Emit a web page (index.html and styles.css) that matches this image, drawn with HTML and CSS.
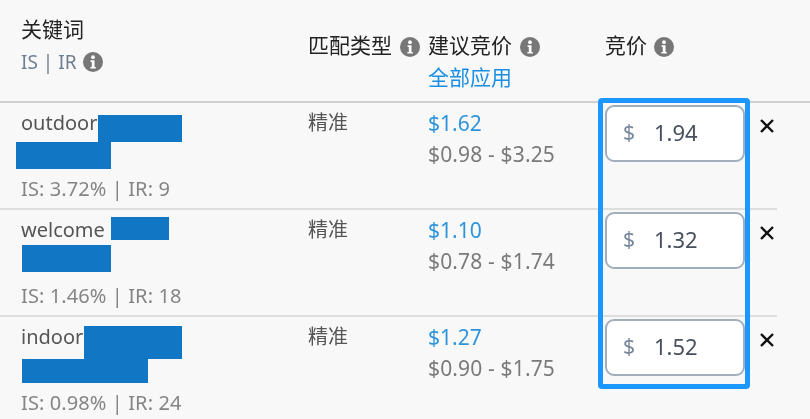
FILE: index.html
```html
<!DOCTYPE html>
<html lang="zh-CN">
<head>
<meta charset="utf-8">
<title>关键词竞价</title>
<link rel="stylesheet" href="styles.css">
</head>
<body>
<svg class="defs" width="0" height="0" aria-hidden="true">
  <symbol id="info" viewBox="0 0 20 20">
    <circle cx="10" cy="10" r="10" fill="#777"/>
    <circle cx="10" cy="5.2" r="1.9" fill="#fff"/>
    <path d="M7.6 8.3h3.9v6.6h1.3v1.6H7.4v-1.6h1.4v-5H7.6z" fill="#fff"/>
  </symbol>
  <symbol id="close" viewBox="0 0 16 16">
    <path d="M2 2l12 12M14 2L2 14" stroke="#111" stroke-width="2.4" fill="none"/>
  </symbol>
</svg>
<main class="table">
  <header class="head">
    <div class="head-kw">
      <div class="title">关键词</div>
      <div class="sub"><span class="soft">IS | IR</span> <svg class="info"><use href="#info"/></svg></div>
    </div>
    <div class="head-match"><span class="title">匹配类型</span> <svg class="info info-wide"><use href="#info"/></svg></div>
    <div class="head-sug">
      <div><span class="title">建议竞价</span> <svg class="info info-wide"><use href="#info"/></svg></div>
      <a class="apply">全部应用</a>
    </div>
    <div class="head-bid"><span class="title">竞价</span> <svg class="info"><use href="#info"/></svg></div>
  </header>

  <section class="row">
    <div class="kw">
      <div class="kw-name">outdoor</div>
      <div class="kw-blank">&nbsp;</div>
      <div class="kw-stats">IS: 3.72% | IR: 9</div>
      <i class="mask m1a"></i><i class="mask m1b"></i>
    </div>
    <div class="match">精准</div>
    <div class="sug"><div class="sug-val">$1.62</div><div class="sug-range">$0.98 - $3.25</div></div>
    <div class="bid"><span class="cur">$</span><span class="amt">1.94</span></div>
    <svg class="close"><use href="#close"/></svg>
  </section>

  <section class="row">
    <div class="kw">
      <div class="kw-name">welcome</div>
      <div class="kw-blank">&nbsp;</div>
      <div class="kw-stats">IS: 1.46% | IR: 18</div>
      <i class="mask m2a"></i><i class="mask m2b"></i>
    </div>
    <div class="match">精准</div>
    <div class="sug"><div class="sug-val">$1.10</div><div class="sug-range">$0.78 - $1.74</div></div>
    <div class="bid"><span class="cur">$</span><span class="amt">1.32</span></div>
    <svg class="close"><use href="#close"/></svg>
  </section>

  <section class="row row-last">
    <div class="kw">
      <div class="kw-name">indoor</div>
      <div class="kw-blank">&nbsp;</div>
      <div class="kw-stats">IS: 0.98% | IR: 24</div>
      <i class="mask m3a"></i><i class="mask m3b"></i>
    </div>
    <div class="match">精准</div>
    <div class="sug"><div class="sug-val">$1.27</div><div class="sug-range">$0.90 - $1.75</div></div>
    <div class="bid"><span class="cur">$</span><span class="amt">1.52</span></div>
    <svg class="close"><use href="#close"/></svg>
  </section>

  <div class="frame"></div>
</main>
</body>
</html>
```

FILE: styles.css
```css
* { box-sizing: border-box; }
html, body { margin: 0; padding: 0; }
body {
  width: 810px;
  height: 419px;
  overflow: hidden;
  background: #f8f8f8;
  font-family: "Noto Sans", "Noto Sans CJK SC", sans-serif;
  font-size: 20px;
  line-height: 30px;
  color: #666;
}
.defs { position: absolute; }
.table { position: relative; height: 419px; }

.title, .soft, .apply, .kw-name, .kw-stats, .match, .sug-val, .sug-range, .cur, .amt {
  filter: blur(0.35px);
}

.head {
  display: grid;
  grid-template-columns: 287px 120px 177px 1fr;
  height: 103px;
  padding: 14px 0 0 21px;
  border-bottom: 2px solid #d0d0d0;
}
.title { color: #222; font-size: 21px; }
.sub { color: #6f7f90; display: flex; align-items: center; gap: 7px; line-height: 36px; font-size: 19px; }
.head-match, .head-bid { padding-top: 16px; line-height: 30px; }
.head-sug { padding-top: 16px; }
.head-sug > div { line-height: 30px; }
.info { width: 20px; height: 20px; vertical-align: -4px; margin-left: 2px; }
.info-wide { margin-left: 3px; }
.sub .info { margin-left: 0; }
.apply { color: #1a8fe3; display: block; line-height: 32px; font-size: 21px; }

.row {
  display: grid;
  grid-template-columns: 287px 120px 177px 140px 22px 1fr;
  position: relative;
  width: 777px;
  height: 107px;
  padding: 5px 0 0 21px;
  border-bottom: 2px solid #dedede;
}
.row-last { border-bottom: 0; }
.kw { position: relative; }
.kw-name { color: #555; line-height: 30px; }
.kw-blank { line-height: 35px; }
.kw-stats { color: #858585; line-height: 32px; letter-spacing: 0.1px; }
.match { color: #555; line-height: 30px; font-size: 20px; }
.sug-val { color: #2d94dc; line-height: 30px; font-size: 21px; }
.sug-range { color: #7a7a7a; line-height: 32px; font-size: 21px; letter-spacing: 0.15px; }

.bid {
  display: flex;
  align-items: center;
  height: 57px;
  margin-top: -3px;
  padding: 0 0 4px 16px;
  background: #fff;
  border: 2px solid #a3aebc;
  border-radius: 9px;
}
.cur { color: #76869a; width: 31px; font-size: 21px; }
.amt { color: #47505e; font-size: 22px; }
.close { width: 16px; height: 16px; margin: 10px 0 0 14px; }

.mask { position: absolute; display: block; background: #1177c5; }
.m1a { left: 77px; top: 7px; width: 84px; height: 27px; }
.m1b { left: -5px; top: 34px; width: 95px; height: 27px; }
.m2a { left: 90px; top: 2px; width: 58px; height: 23px; }
.m2b { left: 1px; top: 30px; width: 89px; height: 27px; }
.m3a { left: 63px; top: 4px; width: 98px; height: 33px; }
.m3b { left: 1px; top: 37px; width: 126px; height: 24px; }

.frame {
  position: absolute;
  left: 598px;
  top: 98px;
  width: 152px;
  height: 291px;
  border: 5px solid #1a98ff;
  border-radius: 4px;
}
```
